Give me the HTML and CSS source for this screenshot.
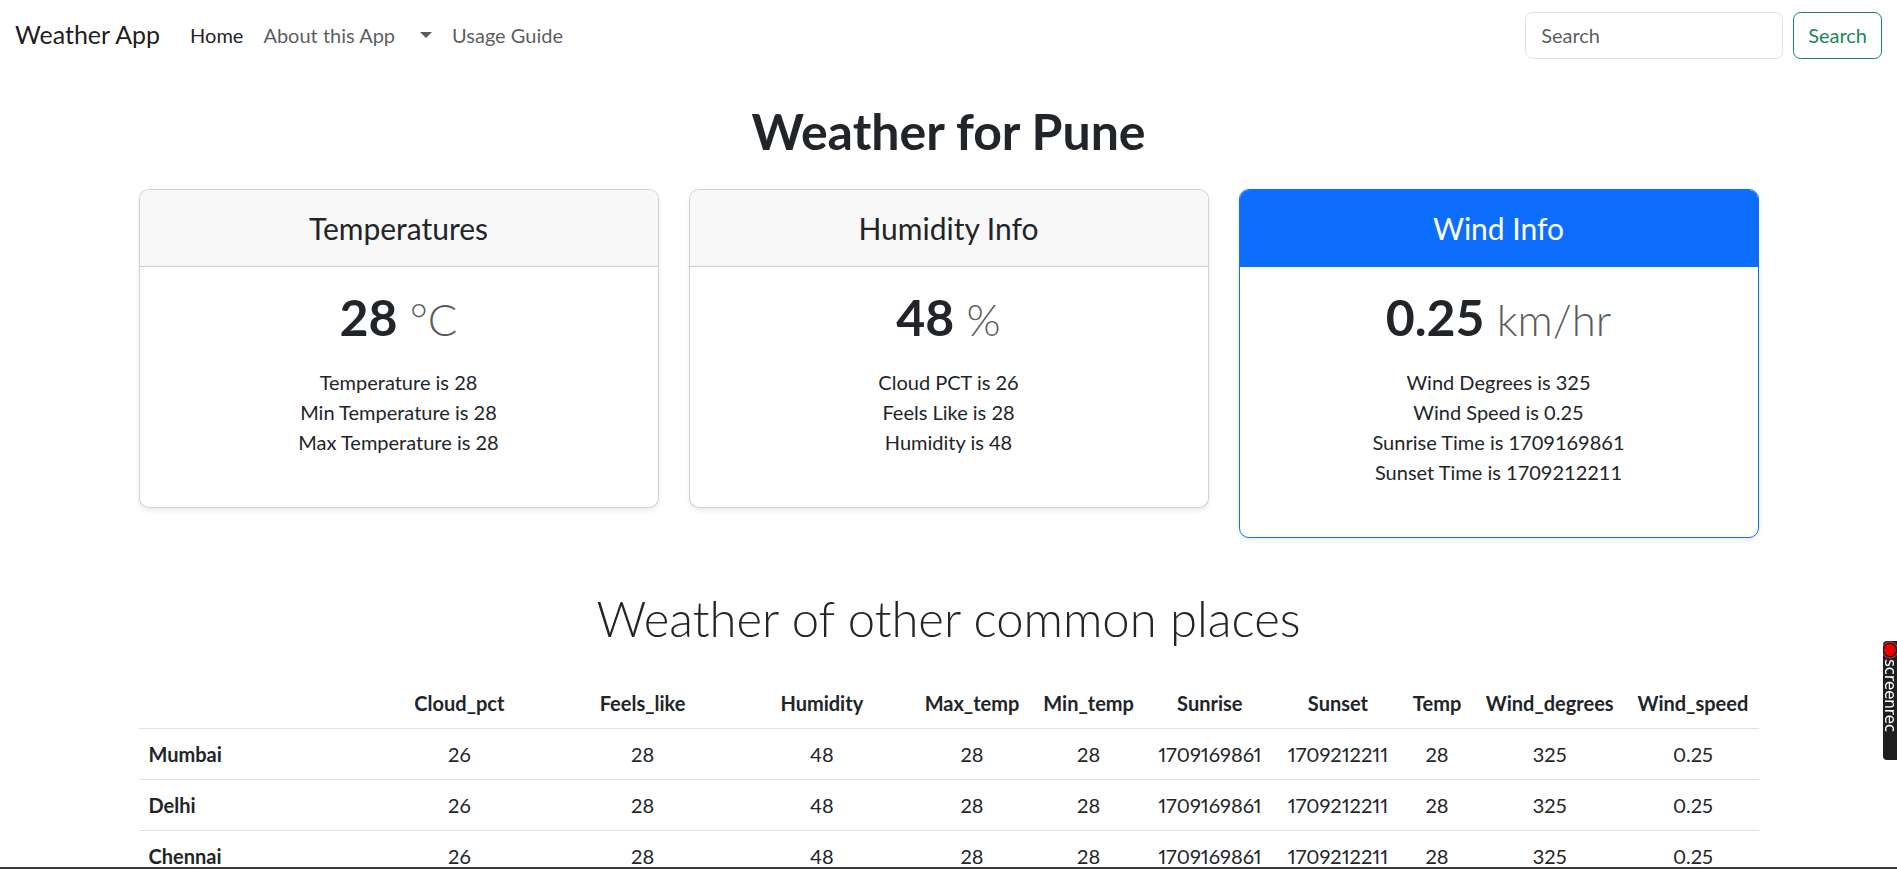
FILE: index.html
```html
<!DOCTYPE html>
<html lang="en">
<head>
<meta charset="utf-8">
<title>Weather App</title>
<link rel="stylesheet" href="styles.css">
</head>
<body>
<nav class="navbar">
  <div class="nav-inner">
    <a class="brand" href="#">Weather App</a>
    <ul class="nav-links">
      <li><a class="nav-link active" href="#">Home</a></li>
      <li><a class="nav-link" href="#">About this App</a></li>
      <li><a class="nav-link dropdown-toggle" href="#"><span class="caret"></span></a></li>
      <li><a class="nav-link" href="#">Usage Guide</a></li>
    </ul>
    <form class="search-form">
      <input class="search-input" type="search" placeholder="Search">
      <button class="btn-search" type="button">Search</button>
    </form>
  </div>
</nav>

<main class="container">
  <h1 class="page-title">Weather for Pune</h1>

  <div class="cards">
    <div class="card">
      <div class="card-header"><h4 class="card-heading">Temperatures</h4></div>
      <div class="card-body">
        <h1 class="card-title">28 <small class="unit">°C</small></h1>
        <ul class="facts">
          <li>Temperature is 28</li>
          <li>Min Temperature is 28</li>
          <li>Max Temperature is 28</li>
        </ul>
      </div>
    </div>
    <div class="card">
      <div class="card-header"><h4 class="card-heading">Humidity Info</h4></div>
      <div class="card-body">
        <h1 class="card-title">48 <small class="unit">%</small></h1>
        <ul class="facts">
          <li>Cloud PCT is 26</li>
          <li>Feels Like is 28</li>
          <li>Humidity is 48</li>
        </ul>
      </div>
    </div>
    <div class="card card-primary">
      <div class="card-header"><h4 class="card-heading">Wind Info</h4></div>
      <div class="card-body">
        <h1 class="card-title">0.25 <small class="unit">km/hr</small></h1>
        <ul class="facts">
          <li>Wind Degrees is 325</li>
          <li>Wind Speed is 0.25</li>
          <li>Sunrise Time is 1709169861</li>
          <li>Sunset Time is 1709212211</li>
        </ul>
      </div>
    </div>
  </div>

  <h2 class="section-title">Weather of other common places</h2>

  <table class="weather-table">
    <thead>
      <tr>
        <th class="c-label"></th>
        <th class="c-cloud">Cloud_pct</th>
        <th class="c-feels">Feels_like</th>
        <th class="c-hum">Humidity</th>
        <th class="c-max">Max_temp</th>
        <th class="c-min">Min_temp</th>
        <th class="c-rise">Sunrise</th>
        <th class="c-set">Sunset</th>
        <th class="c-temp">Temp</th>
        <th class="c-deg">Wind_degrees</th>
        <th class="c-speed">Wind_speed</th>
      </tr>
    </thead>
    <tbody>
      <tr>
        <th class="row-label">Mumbai</th>
        <td>26</td><td>28</td><td>48</td><td>28</td><td>28</td><td>1709169861</td><td>1709212211</td><td>28</td><td>325</td><td>0.25</td>
      </tr>
      <tr>
        <th class="row-label">Delhi</th>
        <td>26</td><td>28</td><td>48</td><td>28</td><td>28</td><td>1709169861</td><td>1709212211</td><td>28</td><td>325</td><td>0.25</td>
      </tr>
      <tr>
        <th class="row-label">Chennai</th>
        <td>26</td><td>28</td><td>48</td><td>28</td><td>28</td><td>1709169861</td><td>1709212211</td><td>28</td><td>325</td><td>0.25</td>
      </tr>
    </tbody>
  </table>
</main>

<div class="rec-tab">
  <span class="rec-dot"></span>
  <span class="rec-text">screenrec</span>
</div>
<div class="bottom-edge"></div>
</body>
</html>
```

FILE: styles.css
```css
* { box-sizing: border-box; }

html, body {
  margin: 0;
  padding: 0;
}

body {
  font-family: Lato, "Noto Sans", sans-serif;
  font-size: 20px;
  line-height: 1.5;
  color: #212529;
  background: #fff;
}

a { text-decoration: none; }

/* Navbar */
.navbar {
  padding: 10px 0;
}

.nav-inner {
  display: flex;
  align-items: center;
  padding: 0 15px;
}

.brand {
  font-size: 25px;
  line-height: 1.5;
  color: rgba(0, 0, 0, 0.9);
  margin-right: 20px;
  padding: 6px 0;
}

.nav-links {
  display: flex;
  align-items: center;
  list-style: none;
  margin: 0;
  padding: 0;
  flex: 1;
}

.nav-link {
  display: flex;
  align-items: center;
  padding: 10px 10px;
  color: rgba(33, 37, 41, 0.75);
}

.nav-link.active {
  color: #212529;
}

.dropdown-toggle {
  height: 50px;
}

.caret {
  display: inline-block;
  margin-left: 5px;
  width: 0;
  height: 0;
  border-top: 6px solid rgba(33, 37, 41, 0.75);
  border-left: 6px solid transparent;
  border-right: 6px solid transparent;
}

.search-form {
  display: flex;
  align-items: center;
  gap: 10px;
}

.search-input {
  width: 258px;
  height: 47px;
  padding: 7px 15px;
  font-family: inherit;
  font-size: 20px;
  color: #212529;
  border: 1px solid #dee2e6;
  border-radius: 7.5px;
  outline: none;
}

.search-input::placeholder {
  color: rgba(33, 37, 41, 0.75);
}

.btn-search {
  height: 47px;
  padding: 7px 14px;
  font-family: inherit;
  font-size: 20px;
  color: #198754;
  background: #fff;
  border: 1px solid #198754;
  border-radius: 7.5px;
}

/* Main */
.container {
  width: 1650px;
  margin: 0 auto;
  padding: 0 15px;
}

.page-title {
  margin: 31px 0 28px;
  font-size: 50px;
  line-height: 1.2;
  font-weight: 700;
  text-align: center;
}

.cards {
  display: grid;
  grid-template-columns: repeat(3, 1fr);
  column-gap: 30px;
  align-items: start;
  margin-bottom: 30px;
  text-align: center;
}

.card {
  border: 1px solid rgba(0, 0, 0, 0.175);
  border-radius: 10px;
  box-shadow: 0 2.5px 5px rgba(0, 0, 0, 0.075);
  overflow: hidden;
  background: #fff;
}

.card-header {
  padding: 20px 20px;
  background: #f8f8f8;
  border-bottom: 1px solid rgba(0, 0, 0, 0.175);
}

.card-heading {
  margin: 0;
  font-size: 30px;
  line-height: 1.2;
  font-weight: 400;
}

.card-primary {
  border-color: #0d6efd;
}

.card-primary .card-header {
  background: #0d6efd;
  color: #fff;
  border-bottom-color: #0d6efd;
}

.card-body {
  padding: 20px;
}

.card-title {
  margin: 0 0 10px;
  font-size: 50px;
  line-height: 1.2;
  font-weight: 700;
}

.unit {
  font-size: 0.875em;
  font-weight: 300;
  color: rgba(33, 37, 41, 0.75);
}

.facts {
  list-style: none;
  margin: 20px 0 30px;
  padding: 0;
}

.section-title {
  margin: 51px 0 30px;
  font-size: 49px;
  line-height: 1.2;
  font-weight: 300;
  text-align: center;
}

/* Table */
.weather-table {
  width: 100%;
  border-collapse: collapse;
  text-align: center;
}

.weather-table th,
.weather-table td {
  padding: 10px;
  border-bottom: 1px solid #dee2e6;
  white-space: nowrap;
}

.weather-table td {
  font-variant-numeric: proportional-nums;
}

.weather-table th { font-weight: 700; }

.weather-table .row-label { text-align: left; }

.c-label { width: 226px; }
.c-cloud { width: 189px; }
.c-feels { width: 177px; }
.c-hum { width: 181px; }
.c-max { width: 119px; }
.c-min { width: 114px; }
.c-rise { width: 128px; }
.c-set { width: 128px; }
.c-temp { width: 70px; }
.c-deg { width: 155px; }
.c-speed { width: 131px; }

/* Recorder tab */
.rec-tab {
  position: fixed;
  right: -8px;
  top: 641px;
  width: 22px;
  height: 119px;
  background: #1e1e1e;
  border-radius: 4px;
  display: flex;
  flex-direction: column;
  align-items: center;
  padding-top: 3px;
  gap: 3px;
  overflow: hidden;
}

.rec-dot {
  width: 12px;
  height: 12px;
  border-radius: 50%;
  background: #e00;
  box-shadow: 0 0 0 1.5px #1e1e1e, 0 0 0 2.5px #d33;
  margin-left: -8px;
}

.rec-text {
  writing-mode: vertical-rl;
  color: #fff;
  font-family: "DejaVu Sans", sans-serif;
  font-size: 15px;
  line-height: 1;
  margin-left: -10px;
}

.bottom-edge {
  position: fixed;
  left: 0;
  right: 0;
  bottom: 0;
  height: 2px;
  background: #3a3a3a;
}
```
